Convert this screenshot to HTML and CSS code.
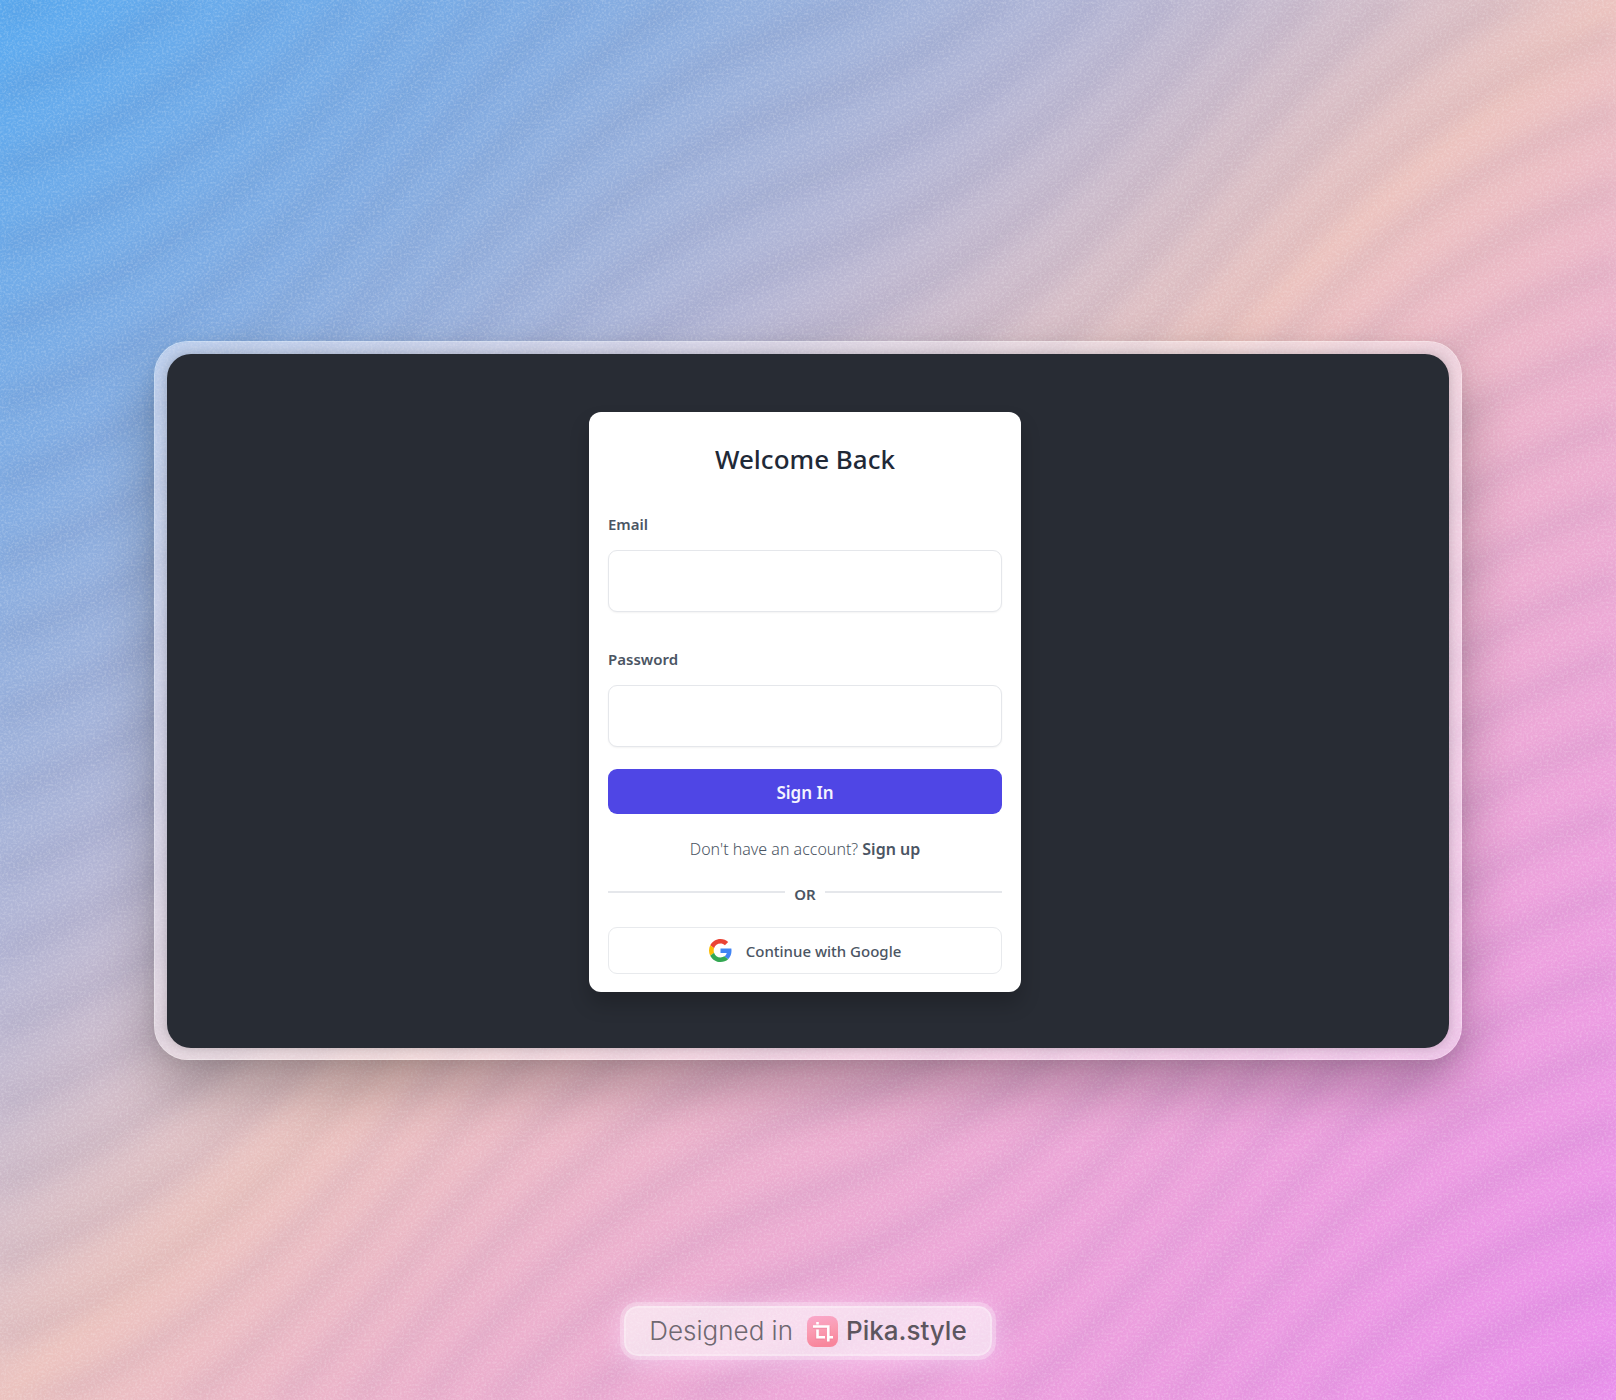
FILE: index.html
```html
<!DOCTYPE html>
<html lang="en">
<head>
  <meta charset="utf-8">
  <meta name="viewport" content="width=device-width, initial-scale=1">
  <title>Welcome Back</title>
  <link rel="stylesheet" href="styles.css">
</head>
<body>
  <svg class="backdrop" aria-hidden="true">
    <defs>
      <pattern id="waves" width="808" height="78" patternUnits="userSpaceOnUse" patternTransform="matrix(1 -0.76 0 1 0 14)">
        <g fill="none" stroke="#3c3c5a" stroke-opacity=".04">
          <g id="wave">
            <path stroke-width="38" d="M-8 -3L0 0C147 62 257 62 404 0S661 -62 808 0L816 3"/>
            <path stroke-width="24" d="M-8 -3L0 0C147 62 257 62 404 0S661 -62 808 0L816 3"/>
            <path stroke-width="10" d="M-8 -3L0 0C147 62 257 62 404 0S661 -62 808 0L816 3"/>
          </g>
          <use href="#wave" y="-78"/>
          <use href="#wave" y="78"/>
          <use href="#wave" y="156"/>
        </g>
      </pattern>
      <filter id="grain" x="0" y="0" width="100%" height="100%">
        <feTurbulence type="fractalNoise" baseFrequency=".45" numOctaves="2" seed="4"/>
        <feColorMatrix values="0 0 0 0 1  0 0 0 0 1  0 0 0 0 1  0 1.2 0 0 -.5"/>
      </filter>
    </defs>
    <rect class="waves" width="100%" height="100%" fill="url(#waves)"/>
    <rect class="grain" width="100%" height="100%" filter="url(#grain)"/>
  </svg>

  <div class="page">
    <main class="frame">
      <div class="screen">
        <section class="card">
          <h1 class="title">Welcome Back</h1>
          <form class="form">
            <div class="field">
              <label class="label" for="email">Email</label>
              <input class="input" id="email" type="email">
            </div>
            <div class="field">
              <label class="label" for="password">Password</label>
              <input class="input" id="password" type="password">
            </div>
            <button class="submit" type="submit">Sign In</button>
          </form>
          <p class="signup">Don't have an account? <a href="#">Sign up</a></p>
          <div class="divider"><span>OR</span></div>
          <button class="google" type="button">
            <svg class="google-icon" viewBox="0 0 48 48" aria-hidden="true">
              <path fill="#EA4335" d="M24 9.5c3.54 0 6.71 1.22 9.21 3.6l6.85-6.85C35.9 2.38 30.47 0 24 0 14.62 0 6.51 5.38 2.56 13.22l7.98 6.19C12.43 13.72 17.74 9.5 24 9.5z"/>
              <path fill="#4285F4" d="M46.98 24.55c0-1.57-.15-3.09-.38-4.55H24v9.02h12.94c-.58 2.96-2.26 5.48-4.78 7.18l7.73 6c4.51-4.18 7.09-10.36 7.09-17.65z"/>
              <path fill="#FBBC05" d="M10.53 28.59c-.48-1.45-.76-2.99-.76-4.59s.27-3.14.76-4.59l-7.98-6.19C.92 16.46 0 20.12 0 24c0 3.88.92 7.54 2.56 10.78l7.97-6.19z"/>
              <path fill="#34A853" d="M24 48c6.48 0 11.93-2.13 15.89-5.81l-7.73-6c-2.15 1.45-4.92 2.3-8.16 2.3-6.26 0-11.57-4.22-13.47-9.91l-7.98 6.19C6.51 42.62 14.62 48 24 48z"/>
            </svg>
            <span>Continue with Google</span>
          </button>
        </section>
      </div>
    </main>

    <footer class="badge">
      <span class="badge-text">Designed in</span>
      <svg class="badge-icon" viewBox="0 0 31 31" aria-hidden="true">
        <defs>
          <linearGradient id="logo" x1="0" y1="0" x2=".2" y2="1">
            <stop offset="0" stop-color="#f9a8cc"/>
            <stop offset=".5" stop-color="#fa9cb2"/>
            <stop offset="1" stop-color="#f8869c"/>
          </linearGradient>
        </defs>
        <rect width="31" height="31" rx="8" fill="url(#logo)"/>
        <path fill="none" stroke="#e87f9b" stroke-opacity=".5" stroke-width="3" d="M6 11.5H22V26M10 14.500V22.500H17M20 22.500H26"/>
        <path fill="none" stroke="#fff" stroke-width="2.600" d="M6 10.500H21.300V25.500M10.500 6V8.500M10.500 13.500V21.300H18M21 21.300H26"/>
      </svg>
      <span class="badge-name">Pika.style</span>
    </footer>
  </div>
</body>
</html>
```
FILE: styles.css
```css
* {
  box-sizing: border-box;
}

body {
  margin: 0;
  font-family: "Noto Sans", "Open Sans", sans-serif;
  background: linear-gradient(to bottom right, #5aaaf0 0%, #82ace2 18%, #b4b6d5 34%, #ecc3bf 50%, #ecb2cc 62%, #eda1dd 80%, #ea90ec 100%);
}

.backdrop {
  position: absolute;
  inset: 0;
  width: 100%;
  height: 100%;
}

.waves {
  filter: blur(9px);
  opacity: .55;
}

.grain {
  opacity: .4;
}

.page {
  position: relative;
  display: grid;
  grid-template-rows: 1fr auto 1fr;
  min-height: 100vh;
  padding: 41px 154px 40px;
}

.frame {
  grid-row: 2;
  padding: 12px 12px 11px;
  border: 1px solid rgba(255, 255, 255, .55);
  border-radius: 34px;
  background: rgba(245, 240, 245, .5);
  background-clip: padding-box;
  box-shadow: 0 28px 56px rgba(0, 0, 0, .27), 0 4px 16px rgba(0, 0, 0, .07);
}

.screen {
  display: grid;
  justify-items: center;
  padding: 58px 6px 56px 0;
  border-radius: 24px;
  background: #282c34;
  box-shadow: 0 0 12px rgba(0, 0, 0, .2);
}

.card {
  width: 432px;
  max-width: 100%;
  padding: 29px 19px 18px;
  border-radius: 12px;
  background: #fff;
  box-shadow: 0 12px 20px rgba(0, 0, 0, .2);
}

.title {
  margin: 0 0 37px;
  font-size: 26px;
  line-height: 36px;
  font-weight: 500;
  text-align: center;
  color: #1f2937;
}

.form {
  display: grid;
  gap: 37px;
}

.field {
  display: grid;
  gap: 16px;
}

.label {
  font-size: 15px;
  line-height: 20px;
  font-weight: 600;
  color: #4b5563;
}

.input {
  width: 100%;
  height: 62px;
  padding: 0 16px;
  border: 1px solid #e5e7eb;
  border-radius: 9px;
  background: #fff;
  font: inherit;
  box-shadow: 0 1px 2px rgba(0, 0, 0, .05);
}

.submit {
  height: 45px;
  margin-top: -15px;
  padding: 3px 0 0;
  border: 0;
  border-radius: 9px;
  background: #4f46e5;
  color: #f4f4fe;
  font: 600 17px/24px "Noto Sans", "Open Sans", sans-serif;
}

.signup {
  margin: 25px 0;
  font-size: 16px;
  line-height: 20px;
  font-weight: 300;
  text-align: center;
  color: #4b5563;
}

.signup a {
  font-weight: 600;
  color: #4b5563;
  text-decoration: none;
}

.divider {
  display: flex;
  align-items: center;
  gap: 9px;
  margin-bottom: 23px;
  font-size: 15px;
  line-height: 20px;
  font-weight: 600;
  color: #4b5563;
}

.divider::before,
.divider::after {
  content: "";
  flex: 1;
  height: 2px;
  margin-bottom: 4px;
  background: #e5e7eb;
}

.google {
  display: flex;
  align-items: center;
  justify-content: center;
  gap: 14px;
  width: 100%;
  height: 47px;
  padding: 0;
  border: 1px solid #e8eaed;
  border-radius: 9px;
  background: #fff;
  font: 500 15px/20px "Noto Sans", "Open Sans", sans-serif;
  color: #4b5563;
}

.google-icon {
  width: 23px;
  height: 23px;
}

.badge {
  grid-row: 3;
  place-self: end center;
  display: flex;
  align-items: center;
  height: 50px;
  margin-bottom: 4px;
  padding: 0 23px;
  border: 2px solid rgba(255, 255, 255, .25);
  border-radius: 14px;
  background: rgba(255, 255, 255, .6);
  box-shadow: 0 0 0 4px rgba(255, 255, 255, .28), 0 4px 24px 4px rgba(255, 225, 255, .5);
  font: 400 26px/32px Inter, sans-serif;
  color: #5d565f;
}

.badge-text {
  font-weight: 300;
  color: #6f6871;
}

.badge-icon {
  width: 31px;
  height: 31px;
  margin: 0 8px 0 14px;
}

.badge-name {
  font-weight: 500;
}
```
